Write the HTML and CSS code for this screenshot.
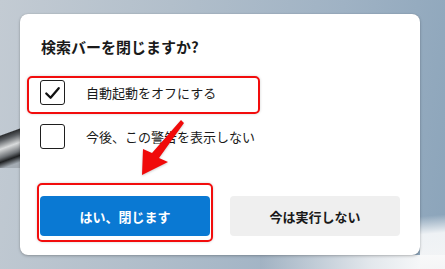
FILE: index.html
```html
<!DOCTYPE html>
<html lang="ja">
<head>
<meta charset="utf-8">
<title>検索バーを閉じますか?</title>
<link rel="stylesheet" href="styles.css">
</head>
<body>
<div class="stage">
  <div class="dialog">
    <h1 class="title">検索バーを閉じますか?</h1>
    <div class="options">
      <label class="option">
        <span class="check checked">
          <svg viewBox="0 0 24 24" width="24" height="24"><path d="M5.5 12.5 L10 17 L18.5 7" fill="none" stroke="#111" stroke-width="2.4" stroke-linecap="round" stroke-linejoin="round"/></svg>
        </span>
        <span class="label">自動起動をオフにする</span>
      </label>
      <label class="option">
        <span class="check"></span>
        <span class="label">今後、この警告を表示しない</span>
      </label>
    </div>
    <div class="actions">
      <button class="btn primary">はい、閉じます</button>
      <button class="btn secondary">今は実行しない</button>
    </div>
  </div>
  <div class="mark mark-option"></div>
  <div class="mark mark-button"></div>
  <svg class="arrow" width="445" height="269" viewBox="0 0 445 269">
    <polygon points="181,120 184,123 159,158 168,162 142,175 143,149 152,153" fill="#f00a0a"/>
  </svg>
</div>
</body>
</html>
```

FILE: styles.css
```css
html, body {
  margin: 0;
  padding: 0;
}
body {
  width: 445px;
  height: 269px;
  overflow: hidden;
  font-family: "Noto Sans CJK JP", "Noto Sans", sans-serif;
  background:
    linear-gradient(160deg, transparent 0 60%, rgba(255,255,255,0.0) 60%),
    linear-gradient(100deg, #c3cbd3 0%, #b2bfcb 35%, #9fb2c4 70%, #8ba4ba 100%);
}
.stage {
  position: relative;
  width: 445px;
  height: 269px;
  padding: 14px 0 0 20px;
  box-sizing: border-box;
  background:
    linear-gradient(175deg, transparent 0 40%, rgba(255,255,255,0.85) 60%, #f4f5f6 100%) right 180px / 25px 89px no-repeat,
    linear-gradient(90deg, rgba(160,176,192,0.6) 0%, rgba(235,238,241,0.9) 60%, #ffffff 100%) 260px 255px / 185px 14px no-repeat,
    linear-gradient(160deg, transparent 0 30%, #2d2f31 32%, #5a5e62 40%, #d9dbdc 55%, #6e7276 70%, #1f2123 78%, #a4acb4 90%) 0 118px / 20px 50px no-repeat;
}
.dialog {
  width: 400px;
  height: 241px;
  box-sizing: border-box;
  background: #ffffff;
  border-radius: 8px;
  box-shadow: 0 1px 3px rgba(0,0,0,0.25), 0 0 1px rgba(0,0,0,0.2);
  padding: 22px 20px 20px 21px;
  display: flex;
  flex-direction: column;
}
.title {
  margin: 0;
  font-size: 15px;
  line-height: 22px;
  font-weight: 700;
  color: #1a1a1a;
}
.options {
  margin-top: 22px;
  display: flex;
  flex-direction: column;
  gap: 19px;
}
.option {
  display: flex;
  align-items: center;
  gap: 21px;
  padding-left: -1px;
  height: 25px;
}
.check {
  width: 25px;
  height: 25px;
  box-sizing: border-box;
  border: 1.5px solid #1e1e1e;
  border-radius: 3px;
  display: flex;
  align-items: center;
  justify-content: center;
  margin-left: -1px;
}
.check svg {
  display: block;
}
.label {
  font-size: 13px;
  color: #1a1a1a;
  line-height: 20px;
}
.actions {
  margin-top: 47px;
  display: flex;
  gap: 20px;
  margin-left: -1px;
}
.btn {
  width: 170px;
  height: 40px;
  border: none;
  border-radius: 4px;
  font-family: inherit;
  font-size: 13px;
  font-weight: 700;
  padding: 0;
}
.primary {
  background: #0a79d3;
  color: #ffffff;
}
.secondary {
  background: #efefef;
  color: #1a1a1a;
}
.mark {
  position: absolute;
  border: 2px solid #f20d0d;
  border-radius: 5px;
  box-sizing: border-box;
  box-shadow: 0 0 3px rgba(0,0,0,0.18);
}
.mark-option {
  left: 27px;
  top: 76px;
  width: 233px;
  height: 38px;
}
.mark-button {
  left: 37px;
  top: 183px;
  width: 176px;
  height: 59px;
}
.arrow {
  position: absolute;
  left: 0;
  top: 0;
  filter: drop-shadow(0 1px 1px rgba(0,0,0,0.2));
}
```
